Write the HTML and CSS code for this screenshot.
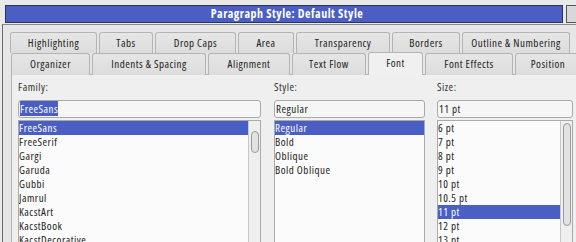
FILE: index.html
```html
<!DOCTYPE html>
<html>
<head>
<meta charset="utf-8">
<link rel="stylesheet" href="styles.css">
</head>
<body>
<div class="screen">
  <div class="titlerow">
    <div class="titlebar">Paragraph Style: Default Style</div>
    <div class="winbtn"></div>
  </div>
  <div class="dialog">
    <div class="tabs">
      <div class="tabrow row1">
        <div class="tab">Highlighting</div>
        <div class="tab">Tabs</div>
        <div class="tab">Drop Caps</div>
        <div class="tab">Area</div>
        <div class="tab">Transparency</div>
        <div class="tab">Borders</div>
        <div class="tab">Outline &amp; Numbering</div>
      </div>
      <div class="tabrow row2">
        <div class="tab">Organizer</div>
        <div class="tab">Indents &amp; Spacing</div>
        <div class="tab">Alignment</div>
        <div class="tab">Text Flow</div>
        <div class="tab active">Font</div>
        <div class="tab">Font Effects</div>
        <div class="tab">Position</div>
      </div>
    </div>
    <div class="panel">
      <div class="col family">
        <div class="label">Family:</div>
        <div class="input"><span class="sel">FreeSans</span></div>
        <div class="list">
          <div class="items">
            <div class="item selected">FreeSans</div>
            <div class="item">FreeSerif</div>
            <div class="item">Gargi</div>
            <div class="item">Garuda</div>
            <div class="item">Gubbi</div>
            <div class="item">Jamrul</div>
            <div class="item">KacstArt</div>
            <div class="item">KacstBook</div>
            <div class="item">KacstDecorative</div>
          </div>
          <div class="scroll"><div class="thumb thumb-family"></div></div>
        </div>
      </div>
      <div class="col style">
        <div class="label">Style:</div>
        <div class="input">Regular</div>
        <div class="list">
          <div class="items">
            <div class="item selected">Regular</div>
            <div class="item">Bold</div>
            <div class="item">Oblique</div>
            <div class="item">Bold Oblique</div>
          </div>
        </div>
      </div>
      <div class="col size">
        <div class="label">Size:</div>
        <div class="input">11 pt</div>
        <div class="list">
          <div class="items">
            <div class="item">6 pt</div>
            <div class="item">7 pt</div>
            <div class="item">8 pt</div>
            <div class="item">9 pt</div>
            <div class="item">10 pt</div>
            <div class="item">10.5 pt</div>
            <div class="item selected">11 pt</div>
            <div class="item">12 pt</div>
            <div class="item">13 pt</div>
          </div>
          <div class="scroll"><div class="thumb thumb-size"></div></div>
        </div>
      </div>
    </div>
  </div>
</div>
</body>
</html>
```

FILE: styles.css
```css
* { box-sizing: border-box; }
html, body { margin: 0; padding: 0; }
body {
  width: 576px;
  height: 242px;
  overflow: hidden;
  background: #e9e9e9;
  font-family: "Open Sans", "Noto Sans", sans-serif;
  font-stretch: semi-condensed;
  letter-spacing: 0.5px;
  font-size: 11px;
  color: #222;
}
.screen { width: 576px; height: 242px; padding-top: 5px; overflow: hidden; }
.titlerow {
  display: flex;
  height: 18px;
  padding-left: 5px;
  gap: 3px;
}
.titlebar {
  flex: 1;
  background: #4a5ec3;
  border: 1px solid #2e3554;
  color: #fff;
  font-weight: bold;
  font-size: 12px;
  line-height: 15px;
  text-align: center;
  padding-left: 6px;
}
.winbtn {
  width: 10px;
  border: 1px solid #555;
  border-right: none;
  background: #d8d8d8;
}
.dialog {
  margin: 1px 0 0 2px;
  height: 218px;
  border-top: 1px solid #8a8a8a;
  border-left: 1px solid #6a6a6a;
  background: #e6e6e6;
  padding: 7px 0 0 7px;
}
.tabs { height: 42px; }
.tabrow {
  display: grid;
  column-gap: 2px;
}
.row1 {
  grid-template-columns: 87px 54px 81px 56px 94px 68px 108px;
  height: 21px;
}
.row2 {
  grid-template-columns: 79px 114px 82px 74px 55px 88px 66px;
  height: 21px;
  padding-left: 1px;
}
.tab {
  border: 1px solid #b4b4b4;
  border-bottom: none;
  border-radius: 3px 3px 0 0;
  background: linear-gradient(#e6e6e6, #dcdcdc);
  text-align: center;
  line-height: 19px;
  color: #222;
  white-space: nowrap;
}
.tab.active {
  background: #f0f0f0;
  position: relative;
  margin-top: -1px;
  height: 23px;
}
.panel {
  height: 168px;
  margin-left: 1px;
  border-top: 1px solid #b4b4b4;
  border-left: 1px solid #b4b4b4;
  background: #efefef;
  display: flex;
  gap: 12px;
  padding: 5px 0 0 6px;
  overflow: hidden;
}
.col { display: flex; flex-direction: column; }
.family { width: 243px; }
.style { width: 151px; margin-left: 1px; }
.size { width: 136px; }
.label { height: 14px; line-height: 14px; color: #333; margin-bottom: 6px; }
.input {
  flex: none;
  height: 18px;
  border: 1px solid #a9a9a9;
  border-radius: 3px;
  background: #f6f6f6;
  line-height: 16px;
  padding-left: 1px;
  margin-bottom: 2px;
}
.sel { background: #4a5ec3; color: #fff; }
.list {
  flex: 1;
  min-height: 0;
  display: flex;
  border: 1px solid #aaaaaa;
  border-bottom: none;
  background: #fbfbfb;
  overflow: hidden;
}
.items { flex: 1; }
.item { height: 14px; line-height: 14px; padding-left: 0; white-space: nowrap; }
.item.selected { background: #4a5ec3; color: #fff; }
.scroll {
  width: 12px;
  border-left: 1px solid #c8c8c8;
  background: #efefef;
  padding: 2px 1px 0 2px;
}
.thumb {
  border: 1px solid #9a9a9a;
  border-radius: 4px;
  background: #e2e2e2;
}
.thumb-family { height: 22px; margin-top: 8px; }
.thumb-size { height: 103px; margin-top: 0; }
```
